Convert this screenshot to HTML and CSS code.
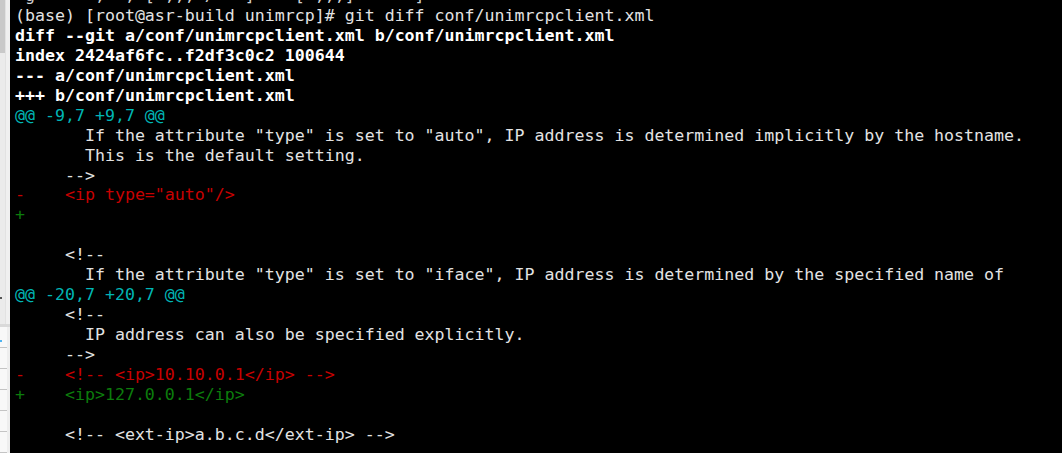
FILE: index.html
```html
<!DOCTYPE html>
<html>
<head>
<meta charset="utf-8">
<link rel="stylesheet" href="styles.css">
</head>
<body>
<div class="app">
  <aside class="side">
    <div class="side-top">
      <div class="thumb-col">
        <div class="thumb"></div>
        <div class="mark-dark"></div>
      </div>
      <div class="track"></div>
    </div>
    <div class="side-sep"></div>
    <div class="side-list">
      <div class="side-row"><span class="mark-blue"></span></div>
      <div class="side-row"></div>
      <div class="side-row"></div>
      <div class="side-row"></div>
      <div class="side-row"></div>
      <div class="side-row"></div>
    </div>
  </aside>
  <main class="term">
    <div class="clip"><div class="line prev"> g      ,  ; [ ,,, /   ]    [ ,,,]      ]</div></div>
    <div class="line">(base) [root@asr-build unimrcp]# git diff conf/unimrcpclient.xml</div>
    <div class="line b">diff --git a/conf/unimrcpclient.xml b/conf/unimrcpclient.xml</div>
    <div class="line b">index 2424af6fc..f2df3c0c2 100644</div>
    <div class="line b">--- a/conf/unimrcpclient.xml</div>
    <div class="line b">+++ b/conf/unimrcpclient.xml</div>
    <div class="line c">@@ -9,7 +9,7 @@</div>
    <div class="line">       If the attribute "type" is set to "auto", IP address is determined implicitly by the hostname.</div>
    <div class="line">       This is the default setting.</div>
    <div class="line">     --&gt;</div>
    <div class="line r">-    &lt;ip type="auto"/&gt;</div>
    <div class="line g">+</div>
    <div class="line"> </div>
    <div class="line">     &lt;!--</div>
    <div class="line">       If the attribute "type" is set to "iface", IP address is determined by the specified name of</div>
    <div class="line c">@@ -20,7 +20,7 @@</div>
    <div class="line">     &lt;!--</div>
    <div class="line">       IP address can also be specified explicitly.</div>
    <div class="line">     --&gt;</div>
    <div class="line r">-    &lt;!-- &lt;ip&gt;10.10.0.1&lt;/ip&gt; --&gt;</div>
    <div class="line g">+    &lt;ip&gt;127.0.0.1&lt;/ip&gt;</div>
    <div class="line"> </div>
    <div class="line">     &lt;!-- &lt;ext-ip&gt;a.b.c.d&lt;/ext-ip&gt; --&gt;</div>
  </main>
</div>
</body>
</html>
```
FILE: styles.css
```css
html, body {
  margin: 0;
  padding: 0;
  height: 100%;
  overflow: hidden;
  background: #000;
}
.app {
  display: flex;
  height: 453px;
  width: 1062px;
}
.side {
  width: 10px;
  flex: none;
  display: flex;
  flex-direction: column;
  background: #f0f0f0;
}
.side-top {
  height: 326px;
  display: flex;
}
.thumb-col {
  width: 5px;
  display: flex;
  flex-direction: column;
  background: #ebebeb;
}
.thumb {
  height: 53px;
  background: #c9c9c9;
}
.mark-dark {
  margin-top: 244px;
  width: 2px;
  height: 2px;
  background: #555;
}
.track {
  flex: 1;
  background: #f0f0f0;
  border-left: 1px solid #e2e2e2;
}
.side-sep {
  height: 3px;
  background: #d9d9d9;
}
.side-list {
  flex: 1;
  background: #f8f8f8;
  border-right: 3px solid #eeeeee;
}
.side-row {
  height: 20px;
  border-bottom: 1px solid #c4c4c4;
  position: relative;
}
.mark-blue {
  position: absolute;
  left: 0;
  top: 13px;
  width: 2px;
  height: 2px;
  background: #4fb3f0;
}
.term {
  flex: 1;
  background: #000;
  padding-left: 5px;
  font-family: "DejaVu Sans Mono", monospace;
  font-size: 16.6px;
  color: #e3e3e3;
  overflow: hidden;
}
.clip {
  height: 6px;
  overflow: hidden;
  display: flex;
  flex-direction: column;
  justify-content: flex-end;
}
.line {
  height: 19.95px;
  line-height: 19.95px;
  white-space: pre;
  flex: none;
}
.prev {
  color: #d0d0d0;
}
.b {
  font-weight: bold;
  color: #ffffff;
}
.c {
  color: #00b5b5;
}
.r {
  color: #c80000;
}
.g {
  color: #0c7c0c;
}
```
